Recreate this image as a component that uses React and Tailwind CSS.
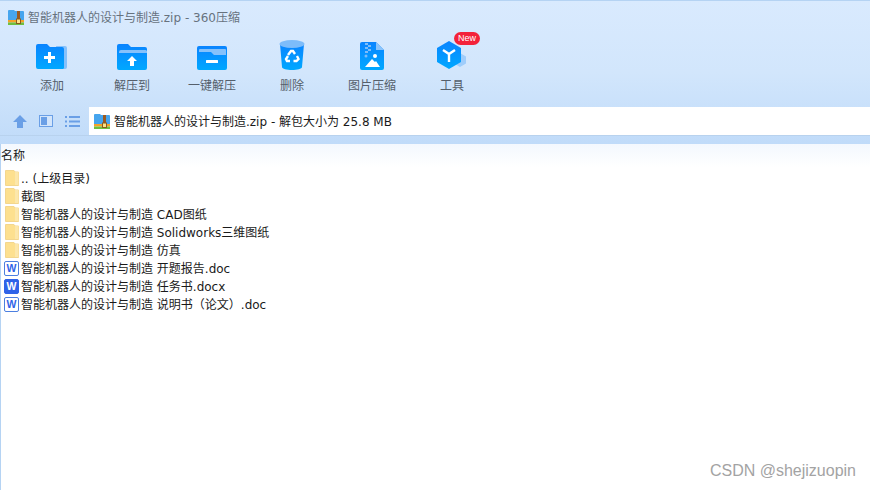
import React from 'react';

const grad = (id, from = '#0a84ff', to = '#00a8ff') => (
  <defs>
    <linearGradient id={id} x1="0" y1="0" x2="0" y2="1">
      <stop offset="0%" stopColor={from} />
      <stop offset="100%" stopColor={to} />
    </linearGradient>
  </defs>
);

const AddIcon = () => (
  <svg width="32" height="26" viewBox="0 0 32 26">
    {grad('g1')}
    <path d="M20 2h9a2 2 0 012 2v19a2 2 0 01-2 2h-5z" fill="#86c1fb" />
    <path d="M2 0h9l3 3h12a2 2 0 012 2v19a2 2 0 01-1 1H2a2 2 0 01-2-2V2a2 2 0 012-2z" fill="url(#g1)" />
    <path d="M12 8h3v4h4v3h-4v4h-3v-4H8v-3h4z" fill="#fff" />
  </svg>
);

const ExtractIcon = () => (
  <svg width="30" height="26" viewBox="0 0 30 26">
    {grad('g2')}
    <path d="M2 0h9l3 3h14a2 2 0 012 2v19a2 2 0 01-2 2H2a2 2 0 01-2-2V2a2 2 0 012-2z" fill="url(#g2)" />
    <path d="M2 8a2 2 0 012-2h24a2 2 0 012 1v2H2z" fill="#86c1fb" />
    <path d="M15 12l5 5h-3v5h-4v-5h-3z" fill="#fff" />
  </svg>
);

const OneKeyIcon = () => (
  <svg width="30" height="24" viewBox="0 0 30 24">
    {grad('g3')}
    <rect width="30" height="24" rx="2" fill="url(#g3)" />
    <path d="M2 4a1 1 0 011-1h25a1 1 0 011 1v5H17l-3-3H2z" fill="#86c1fb" />
    <rect x="9" y="14" width="12" height="3" rx="0.5" fill="#fff" />
  </svg>
);

const TrashIcon = () => (
  <svg width="26" height="30" viewBox="0 0 26 30">
    {grad('g4')}
    <path d="M1 4h24l-2 23c0 2-5 3-10 3S3 29 3 27z" fill="url(#g4)" />
    <ellipse cx="13" cy="4" rx="12.5" ry="4" fill="#7dbcfa" />
    <g fill="none" stroke="#fff" strokeWidth="2.4">
      <path d="M9 15l3-4h2l2 3" />
      <path d="M18 16l1.5 3-2 2h-3" />
      <path d="M11 21H8l-1-2 2-3" />
    </g>
  </svg>
);

const ImageZipIcon = () => (
  <svg width="24" height="28" viewBox="0 0 24 28">
    {grad('g5')}
    <path d="M2 0h14l8 8v18a2 2 0 01-2 2H2a2 2 0 01-2-2V2a2 2 0 012-2z" fill="url(#g5)" />
    <path d="M16 0l8 8h-8z" fill="#8cc4fb" />
    <g fill="#7dbcfa">
      <rect x="5" y="1" width="3" height="2" />
      <rect x="8" y="3" width="3" height="2" />
      <rect x="5" y="5" width="3" height="2" />
      <rect x="8" y="7" width="3" height="2" />
      <rect x="5" y="9" width="3" height="2" />
      <circle cx="6" cy="14" r="1.5" />
    </g>
    <circle cx="15" cy="14" r="2" fill="#fff" />
    <path d="M5 25l7-8 3 3 1-1 4 6z" fill="#fff" />
  </svg>
);

const ToolIcon = () => (
  <svg width="32" height="30" viewBox="0 0 32 30">
    {grad('g6')}
    <path d="M24 13l6 3.5v7L24 27l-6-3.5v-7z" fill="#9fcdfb" />
    <path d="M13 1l12 7v14l-12 7-12-7V8z" fill="url(#g6)" />
    <path d="M7 10l6 4 6-4M13 14v8" fill="none" stroke="#fff" strokeWidth="2.4" />
  </svg>
);

const ZipIcon = () => (
  <svg width="16" height="15" viewBox="0 0 16 15" className="shrink-0">
    <path d="M0 1a1 1 0 011-1h5l1 1h8a1 1 0 011 1v9H0z" fill="#46a5ee" />
    <rect y="10" width="16" height="2.5" fill="#f4a328" />
    <rect y="12.5" width="16" height="2.5" fill="#6fbf3f" />
    <rect x="9" y="1" width="3" height="9" fill="#9a5a22" />
    <rect x="8.5" y="9" width="4" height="4.5" fill="#fbe38a" stroke="#8a5a1c" strokeWidth="1" />
  </svg>
);

const FolderIcon = () => (
  <svg width="14" height="16" viewBox="0 0 14 16" className="shrink-0">
    <path d="M.5.5h8.5l1 1.5h3.500v13.500H.5z" fill="#fde08f" stroke="#f3d68e" />
    <path d="M10 2v13h3.500V2z" fill="#fce7ab" />
  </svg>
);

const WordIcon = ({ solid }) => (
  <svg width="15" height="15" viewBox="0 0 15 15" className="shrink-0">
    <rect x="0.5" y="0.5" width="14" height="14" rx="1.500" fill={solid ? '#2f63e8' : '#fff'} stroke={solid ? '#2f63e8' : '#4c7fe0'} />
    <text x="7.500" y="11" textAnchor="middle" fontSize="10.500" fontWeight="700" fontFamily="'Liberation Sans', sans-serif" fill={solid ? '#fff' : '#2f63e8'}>W</text>
  </svg>
);

const tools = [
  { label: '添加', icon: <AddIcon /> },
  { label: '解压到', icon: <ExtractIcon /> },
  { label: '一键解压', icon: <OneKeyIcon /> },
  { label: '删除', icon: <TrashIcon /> },
  { label: '图片压缩', icon: <ImageZipIcon /> },
  { label: '工具', icon: <ToolIcon />, badge: true },
];

const files = [
  { name: '.. (上级目录)', type: 'folder' },
  { name: '截图', type: 'folder' },
  { name: '智能机器人的设计与制造 CAD图纸', type: 'folder' },
  { name: '智能机器人的设计与制造 Solidworks三维图纸', type: 'folder' },
  { name: '智能机器人的设计与制造 仿真', type: 'folder' },
  { name: '智能机器人的设计与制造 开题报告.doc', type: 'doc' },
  { name: '智能机器人的设计与制造 任务书.docx', type: 'docx' },
  { name: '智能机器人的设计与制造 说明书（论文）.doc', type: 'doc' },
];

export default function App() {
  return (
    <div className="relative w-[870px] h-[490px] overflow-hidden bg-white text-[12px] font-['DejaVu_Sans','Noto_Sans_CJK_SC',sans-serif] text-[#1a1a1a]">
      <div className="h-[144px] flex flex-col border-t border-[#b5d3f3] bg-gradient-to-b from-[#d9eafe] via-[#d2e6fc] to-[#c0dbf9]">
        <div className="h-[32px] flex items-center gap-1 pl-2 text-[#67727e]">
          <ZipIcon />
          <span className="leading-none pt-[2px]">智能机器人的设计与制造.zip - 360压缩</span>
        </div>
        <div className="h-[74px] flex pl-3">
          {tools.map((t) => (
            <div key={t.label} className="w-20 flex flex-col items-center text-[#555f6b]">
              <div className="relative h-[38px] w-full flex items-end justify-center pb-[1px]">
                {t.icon}
                {t.badge && (
                  <span className="absolute top-[-1px] left-[42px] w-[26px] h-[13px] rounded-full bg-[#f3223a] text-white text-[9px] leading-[13px] text-center font-['Liberation_Sans',sans-serif]">New</span>
                )}
              </div>
              <span className="mt-[7px] leading-4">{t.label}</span>
            </div>
          ))}
        </div>
        <div className="h-[29px] flex border-b border-[#b8d2ee]">
          <div className="w-[89px] flex items-center gap-3 pl-[13px] text-[#6a9fe6]">
            <svg width="14" height="13" viewBox="0 0 14 13"><path d="M7 0l7 7h-4v6H4V7H0z" fill="currentColor" /></svg>
            <svg width="14" height="12" viewBox="0 0 14 12">
              <rect x="0.500" y="0.500" width="13" height="11" fill="#d3e5fb" stroke="currentColor" />
              <rect x="2" y="2" width="6" height="8" fill="currentColor" />
            </svg>
            <svg width="15" height="11" viewBox="0 0 15 11" fill="currentColor">
              <rect width="2" height="2" /><rect x="4" width="11" height="2" />
              <rect y="4.500" width="2" height="2" /><rect x="4" y="4.500" width="11" height="2" />
              <rect y="9" width="2" height="2" /><rect x="4" y="9" width="11" height="2" />
            </svg>
          </div>
          <div className="flex-1 bg-white flex items-center gap-[4px] pl-[5px]">
            <ZipIcon />
            <span className="leading-none pt-[2px]">智能机器人的设计与制造.zip - 解包大小为 25.8 MB</span>
          </div>
        </div>
        <div className="flex-1" />
      </div>
      <div className="h-[346px] border-l border-[#b5d3f3]">
        <div className="h-[23px] pt-[3px] bg-gradient-to-b from-[#f3f8fe] to-white leading-[18px]">名称</div>
        <div className="flex flex-col pt-[2px] pl-[3px]">
          {files.map((f) => (
            <div key={f.name} className="h-[18px] flex items-center gap-[2px]">
              <span className="w-[15px] flex justify-center">
                {f.type === 'folder' ? <FolderIcon /> : <WordIcon solid={f.type === 'docx'} />}
              </span>
              <span className="leading-none whitespace-pre pt-[2px]">{f.name}</span>
            </div>
          ))}
        </div>
      </div>
      <span className="absolute right-[14px] bottom-[9px] text-[16px] leading-5 text-[#a3a3a3] font-['Liberation_Sans',sans-serif]">CSDN @shejizuopin</span>
    </div>
  );
}
